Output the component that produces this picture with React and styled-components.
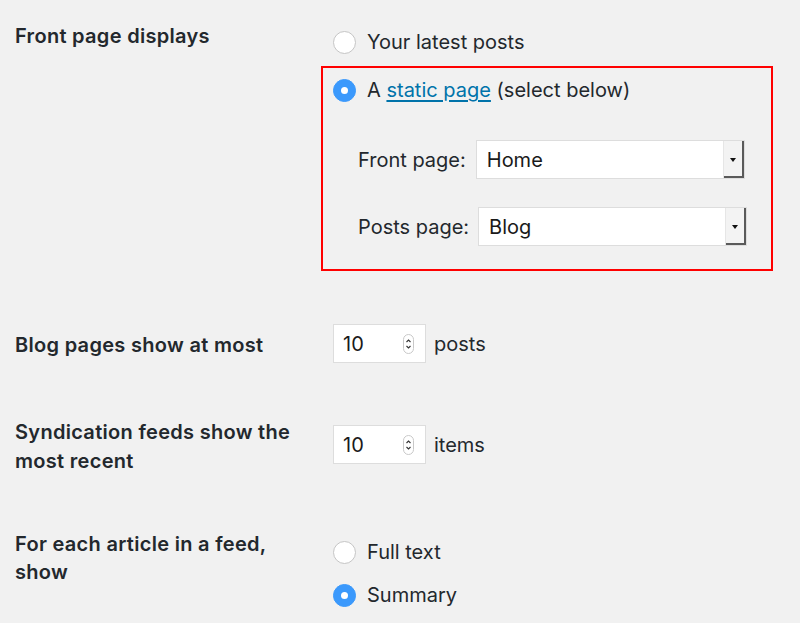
import styled, { createGlobalStyle } from "styled-components";

const GlobalStyle = createGlobalStyle`
  body {
    margin: 0;
    background: #f1f1f1;
    font-family: Inter, "Liberation Sans", sans-serif;
    color: #23282d;
  }
`;

const Page = styled.div`
  width: 800px;
  height: 623px;
  overflow: hidden;
  padding-left: 15px;
  box-sizing: border-box;
`;

const Row = styled.div`
  display: grid;
  grid-template-columns: 318px 1fr;
  padding-top: ${(props) => props.top}px;
`;

const RowLabel = styled.div`
  font-size: 20px;
  font-weight: 600;
  letter-spacing: 0.3px;
  line-height: ${(props) => props.lh || 28}px;
  padding-top: ${(props) => props.offset || 0}px;
`;

const Field = styled.div`
  display: flex;
  flex-direction: column;
  align-items: flex-start;
  padding-top: ${(props) => props.offset || 0}px;
`;

const Choice = styled.label`
  display: flex;
  align-items: center;
  gap: 11px;
  height: 28px;
  font-size: 20px;
  margin-top: ${(props) => props.gap || 0}px;
`;

const RadioDot = styled.span`
  width: 23px;
  height: 23px;
  box-sizing: border-box;
  border-radius: 50%;
  background: ${(props) => (props.checked ? "#3b99fc" : "#fff")};
  border: 1px solid ${(props) => (props.checked ? "#3b99fc" : "#c5c5c5")};
  display: flex;
  align-items: center;
  justify-content: center;
  &::after {
    content: "";
    display: ${(props) => (props.checked ? "block" : "none")};
    width: 7px;
    height: 7px;
    border-radius: 50%;
    background: #fff;
  }
`;

const Link = styled.a`
  color: #0073aa;
  text-decoration: underline;
  text-underline-offset: 3px;
`;

const Highlight = styled.div`
  margin-left: -12px;
  margin-top: 10px;
  width: 452px;
  height: 205px;
  box-sizing: border-box;
  border: 2px solid #ff0000;
  padding: 8px 10px 0;
`;

const SelectRow = styled.div`
  display: flex;
  align-items: center;
  gap: ${(props) => props.gap}px;
  margin-left: 25px;
  margin-top: ${(props) => props.top}px;
`;

const SelectLabel = styled.span`
  font-size: 20px;
`;

const SelectBox = styled.div`
  position: relative;
  width: 269px;
  height: 39px;
  box-sizing: border-box;
  background: #fff;
  border: 1px solid #ddd;
  display: flex;
  align-items: center;
  padding-left: 10px;
  font-size: 20px;
  color: #1a1a1a;
`;

const SelectArrow = styled.span`
  position: absolute;
  right: 0;
  top: 0;
  bottom: 0;
  width: 21px;
  background: #f3f3f3;
  border-left: 1px solid #e6e6e6;
  box-shadow: inset -2px -2px 0 #5a5a5a;
  display: flex;
  align-items: center;
  justify-content: center;
  padding-right: 2px;
  box-sizing: border-box;
  &::after {
    content: "";
    border-left: 3.5px solid transparent;
    border-right: 3.5px solid transparent;
    border-top: 4px solid #111;
  }
`;

const NumberRow = styled.div`
  display: flex;
  align-items: center;
  gap: 8px;
  font-size: 20px;
`;

const NumberBox = styled.div`
  width: 93px;
  height: 39px;
  box-sizing: border-box;
  background: #fff;
  border: 1px solid #ddd;
  display: flex;
  align-items: center;
  justify-content: space-between;
  padding: 0 11px 0 9px;
  font-size: 20px;
  color: #1a1a1a;
`;

const Spinner = () => (
  <svg width="11" height="20" viewBox="0 0 11 20">
    <rect x="0.5" y="0.5" width="10" height="19" rx="5" fill="#fff" stroke="#c8c8c8" />
    <path d="M3.5 8 L5.5 6 L7.5 8" fill="none" stroke="#333" strokeWidth="1.1" />
    <path d="M3.5 12 L5.5 14 L7.5 12" fill="none" stroke="#333" strokeWidth="1.1" />
  </svg>
);

export default function App() {
  return (
    <Page>
      <GlobalStyle />
      <Row top={22}>
        <RowLabel>Front page displays</RowLabel>
        <Field>
          <Choice gap={6}>
            <RadioDot />
            Your latest posts
          </Choice>
          <Highlight>
            <Choice>
              <RadioDot checked />
              <span>
                A <Link href="#">static page</Link> (select below)
              </span>
            </Choice>
            <SelectRow gap={10} top={36}>
              <SelectLabel>Front page:</SelectLabel>
              <SelectBox>
                Home
                <SelectArrow />
              </SelectBox>
            </SelectRow>
            <SelectRow gap={9} top={28}>
              <SelectLabel>Posts page:</SelectLabel>
              <SelectBox>
                Blog
                <SelectArrow />
              </SelectBox>
            </SelectRow>
          </Highlight>
        </Field>
      </Row>
      <Row top={53}>
        <RowLabel offset={7}>Blog pages show at most</RowLabel>
        <Field>
          <NumberRow>
            <NumberBox>
              10
              <Spinner />
            </NumberBox>
            posts
          </NumberRow>
        </Field>
      </Row>
      <Row top={55}>
        <RowLabel lh={29}>
          Syndication feeds show the
          <br />
          most recent
        </RowLabel>
        <Field offset={7}>
          <NumberRow>
            <NumberBox>
              10
              <Spinner />
            </NumberBox>
            items
          </NumberRow>
        </Field>
      </Row>
      <Row top={54}>
        <RowLabel>
          For each article in a feed,
          <br />
          show
        </RowLabel>
        <Field offset={8}>
          <Choice>
            <RadioDot />
            Full text
          </Choice>
          <Choice gap={15}>
            <RadioDot checked />
            Summary
          </Choice>
        </Field>
      </Row>
    </Page>
  );
}
